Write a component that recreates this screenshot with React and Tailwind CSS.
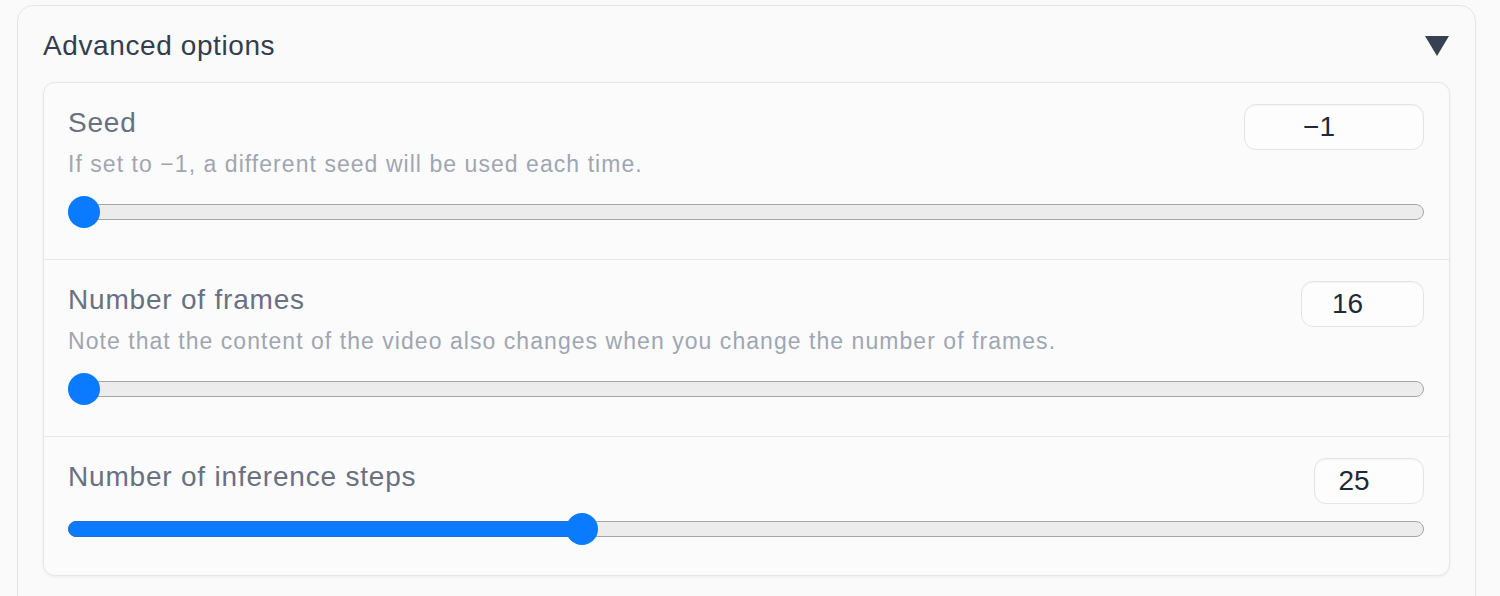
import React from "react";

const SECTIONS = [
  {
    label: "Seed",
    desc: "If set to −1, a different seed will be used each time.",
    value: "−1",
    boxWidth: "w-[180px]",
    pct: 0,
  },
  {
    label: "Number of frames",
    desc: "Note that the content of the video also changes when you change the number of frames.",
    value: "16",
    boxWidth: "w-[123px]",
    pct: 0,
  },
  {
    label: "Number of inference steps",
    desc: null,
    value: "25",
    boxWidth: "w-[110px]",
    pct: 0.376,
  },
];

// Range slider drawn with divs, thumb positioned from the value
const Slider = ({ pct }) => {
  const left = `calc((100% - 32px) * ${pct})`;
  const fill = `calc((100% - 32px) * ${pct} + 16px)`;
  return (
    <div className="relative h-[32px]">
      <div className="absolute left-0 right-[1px] top-[8px] h-[16px] rounded-full border border-[#a6a6a6] bg-[#ececec]" />
      {pct > 0 && (
        <div
          className="absolute left-0 top-[8px] h-[16px] rounded-full bg-[#0a7aff] border border-[#2a6fd0]"
          style={{ width: fill }}
        />
      )}
      <div
        className="absolute top-0 w-[32px] h-[32px] rounded-full bg-[#0a7aff]"
        style={{ left }}
      />
    </div>
  );
};

const Section = ({ label, desc, value, boxWidth, pct, last }) => (
  <div
    className={`px-[24px] pt-[21px] ${
      last ? "pb-[30px]" : "pb-[31px] border-b border-[#e5e7eb]"
    }`}
  >
    <div className="flex items-start justify-between mb-[9px]">
      <div className="mt-[1px] text-[28px] leading-[36px] tracking-[0.8px] text-[#697181]">
        {label}
      </div>
      <div
        className={`${boxWidth} h-[46px] mr-[1px] rounded-[12px] border border-[#e3e4e8] bg-[#fdfdfd] shadow-[inset_0_1px_2px_rgba(0,0,0,0.04)] flex items-center justify-center pr-[30px] text-[28px] text-[#1f2937]`}
      >
        {value}
      </div>
    </div>
    {desc && (
      <div className="-mt-[9px] text-[23px] leading-[28px] tracking-[1.05px] text-[#a0a6b1] pb-[18px]">
        {desc}
      </div>
    )}
    <Slider pct={pct} />
  </div>
);

export default function App() {
  return (
    <div
      className="h-[596px] overflow-hidden bg-[#fafafb] pl-[17px] pr-[24px] pt-[5px]"
      style={{ fontFamily: '"Liberation Sans", Arial, sans-serif' }}
    >
      <div className="h-[700px] rounded-[16px] border border-[#e4e5ea] px-[25px] pt-[22px]">
        <div className="flex items-center justify-between h-[36px] mb-[18px]">
          <div className="text-[28px] leading-[36px] tracking-[0.6px] text-[#333d4d]">
            Advanced options
          </div>
          <svg width="24" height="20" viewBox="0 0 24 20" className="mr-[1px]">
            <polygon points="0,0 24,0 12,20" fill="#374151" />
          </svg>
        </div>
        <div className="rounded-[12px] border border-[#e5e7eb] bg-[#fbfbfc] shadow-[0_1px_3px_rgba(0,0,0,0.06)]">
          {SECTIONS.map((s, i) => (
            <Section key={s.label} {...s} last={i === SECTIONS.length - 1} />
          ))}
        </div>
      </div>
    </div>
  );
}
